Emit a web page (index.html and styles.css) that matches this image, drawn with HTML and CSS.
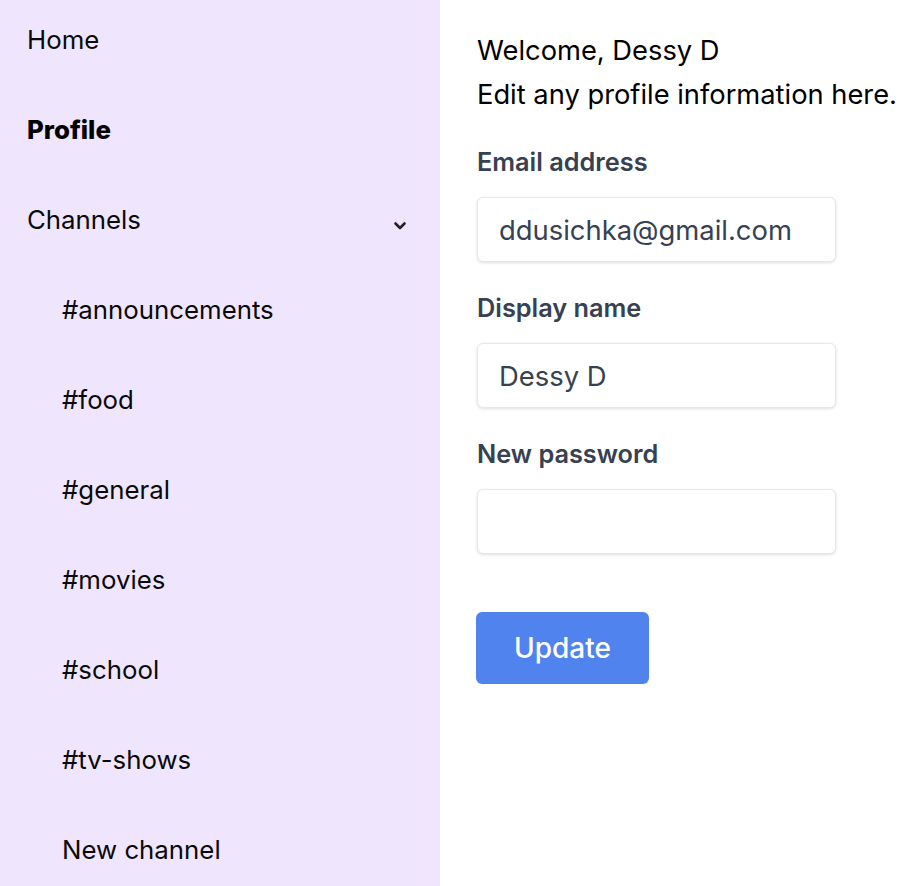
FILE: index.html
```html
<!DOCTYPE html>
<html>
<head>
<meta charset="utf-8">
<link rel="stylesheet" href="styles.css">
</head>
<body>
<div class="app">
  <nav class="sidebar">
    <div class="item">Home</div>
    <div class="item bold">Profile</div>
    <div class="item row">
      <span>Channels</span>
      <svg class="chev" width="14" height="10" viewBox="0 0 14 10"><path d="M2.5 2.5 L7 7 L11.5 2.5" fill="none" stroke="#222" stroke-width="2.6" stroke-linecap="round" stroke-linejoin="round"/></svg>
    </div>
    <div class="item sub">#announcements</div>
    <div class="item sub">#food</div>
    <div class="item sub">#general</div>
    <div class="item sub">#movies</div>
    <div class="item sub">#school</div>
    <div class="item sub">#tv-shows</div>
    <div class="item sub">New channel</div>
  </nav>
  <main class="main">
    <div class="intro">
      <div>Welcome, Dessy D</div>
      <div>Edit any profile information here.</div>
    </div>
    <form class="form">
      <label class="field">
        <span class="label">Email address</span>
        <input class="input" type="text" value="ddusichka@gmail.com">
      </label>
      <label class="field">
        <span class="label">Display name</span>
        <input class="input" type="text" value="Dessy D">
      </label>
      <label class="field">
        <span class="label">New password</span>
        <input class="input" type="password" value="">
      </label>
      <button class="btn" type="button">Update</button>
    </form>
  </main>
</div>
</body>
</html>
```
FILE: styles.css
```css
* { box-sizing: border-box; }
html, body { margin: 0; padding: 0; }
body {
  font-family: Inter, "Noto Sans", sans-serif;
  color: #000;
  background: #fff;
}
.app {
  display: flex;
  min-height: 886px;
}
.sidebar {
  width: 440px;
  flex: none;
  background: #efe6fd;
  padding: 22px 0 0 27px;
  display: flex;
  flex-direction: column;
  gap: 54px;
  height: 886px;
  overflow: hidden;
}
.item {
  font-size: 25.8px;
  line-height: 36px;
  height: 36px;
  color: #0a0a0a;
}
.bold { font-weight: 800; color: #000; }
.row {
  display: flex;
  align-items: center;
  justify-content: space-between;
  padding-right: 33px;
}
.chev { margin-top: 11px; }
.sub { padding-left: 35px; }
.main {
  flex: 1;
  padding: 29px 0 0 37px;
}
.intro {
  font-size: 27.3px;
  line-height: 44px;
  white-space: nowrap;
}
.form {
  display: flex;
  flex-direction: column;
  margin-top: 31px;
}
.field {
  display: flex;
  flex-direction: column;
  margin-bottom: 32px;
}
.label {
  font-size: 25.3px;
  font-weight: 600;
  color: #374151;
  line-height: 28px;
  margin-bottom: 21px;
}
.input {
  width: 359px;
  height: 65px;
  border: 1px solid #e5e7eb;
  border-radius: 6px;
  box-shadow: 0 1px 3px rgba(0,0,0,0.12);
  padding: 0 21px;
  font-family: Inter, "Noto Sans", sans-serif;
  font-size: 27.4px;
  color: #374151;
  background: #fff;
  outline: none;
}
.btn {
  margin-top: 26px;
  margin-left: -1px;
  width: 173px;
  height: 72px;
  background: #5083ee;
  color: #fff;
  border: none;
  border-radius: 6px;
  font-family: Inter, "Noto Sans", sans-serif;
  font-size: 28px;
  font-weight: 500;
  align-self: flex-start;
}
```
